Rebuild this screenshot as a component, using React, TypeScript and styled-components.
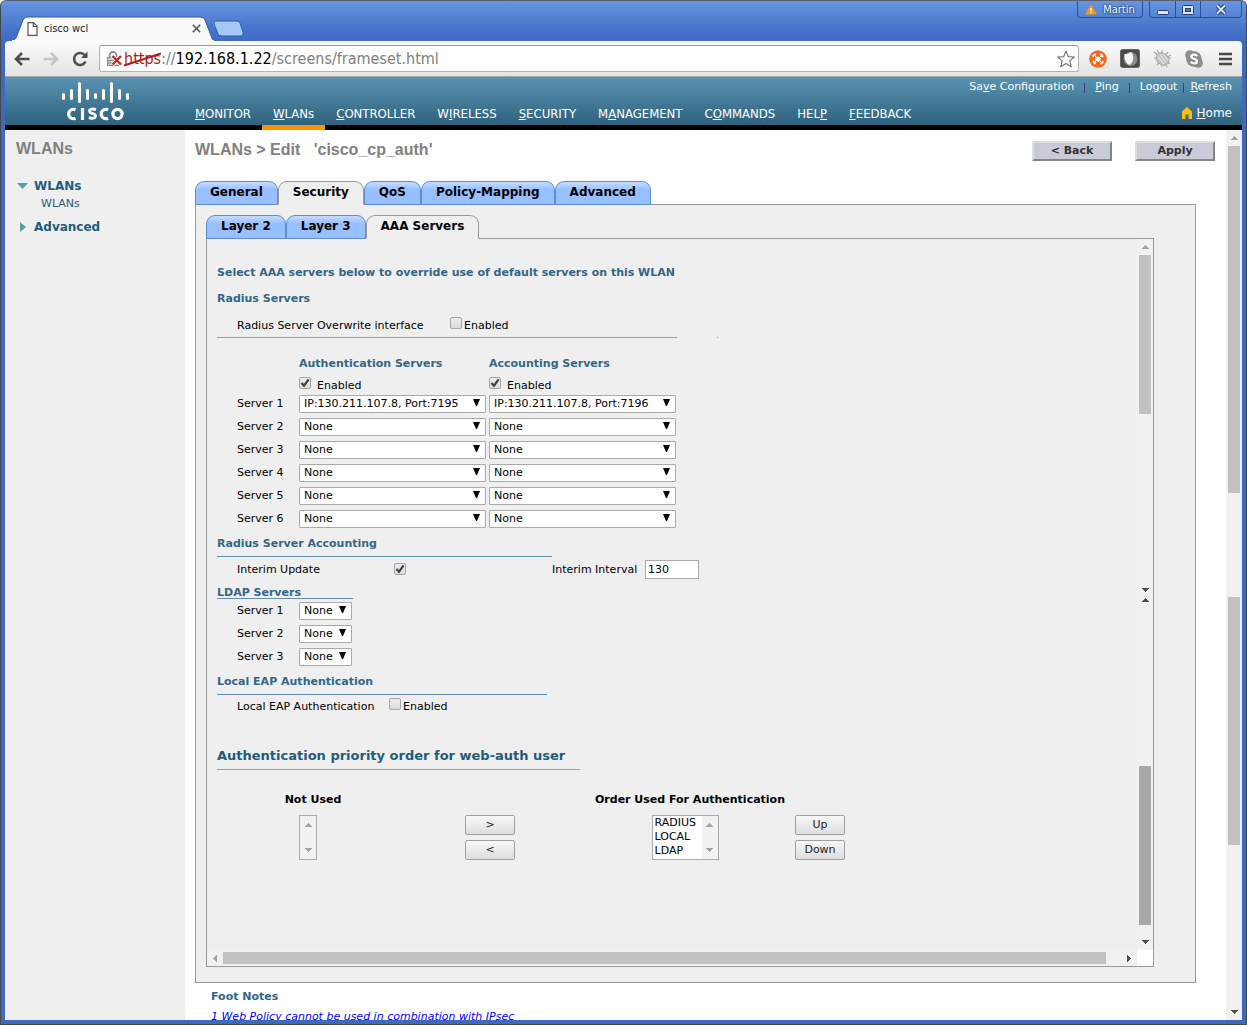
import React from "react";
import styled, { createGlobalStyle, css } from "styled-components";

const verdana = `Verdana, "DejaVu Sans", sans-serif`;
const tahoma = `Tahoma, "DejaVu Sans Condensed", "Noto Sans", sans-serif`;
const arial = `Arial, "Liberation Sans", sans-serif`;

const GlobalStyle = createGlobalStyle`
  *, *::before, *::after { box-sizing: border-box; }
  body { margin: 0; background: #fff; font-family: ${verdana}; font-size: 11px; color: #000; }
  button, input, select { font: inherit; color: inherit; margin: 0; }
  a { color: inherit; text-decoration: none; }
  h1, h2, h3, p, ul { margin: 0; padding: 0; }
  svg { display: block; flex: none; }
`;

/* ---------- browser window ---------- */

const Window = styled.div`
  display: flex;
  flex-direction: column;
  height: calc(100vh - 3px);
  padding: 0 4px 4px 4px;
  background: #3c6abf;
  border: 1px solid #44474f;
  border-top-color: #5a5f6b;
  border-radius: 6px 6px 0 0;
  overflow: hidden;
`;

const TitleBar = styled.div`
  display: flex;
  justify-content: space-between;
  align-items: flex-end;
  flex: none;
  height: 40px;
  margin: 0 -4px;
  background: linear-gradient(#6696e0, #4674cb 70%, #3f6bc4);
`;

const TabStrip = styled.div`
  display: flex;
  align-items: flex-end;
  padding-left: 10px;
`;

const BrowserTab = styled.div`
  display: grid;
  width: 204px;
  height: 25px;
  & > * { grid-area: 1 / 1; }
`;

const BrowserTabLabel = styled.div`
  display: flex;
  align-items: center;
  gap: 6px;
  padding: 0 14px 0 16px;
  font: 11px/16px ${tahoma};
  color: #222;
  z-index: 1;
  span { flex: 1; }
`;

const NewTab = styled.button`
  width: 32px;
  height: 25px;
  padding: 0;
  border: 0;
  background: none;
`;

const WindowControls = styled.div`
  display: flex;
  align-self: flex-start;
  gap: 6px;
  padding-right: 4px;
`;

const ControlGroup = styled.div`
  display: flex;
  height: 17px;
  border: 1px solid #2b4e99;
  border-top: 0;
  border-radius: 0 0 4px 4px;
`;

const ControlButton = styled.button<{ $width: number }>`
  display: flex;
  align-items: center;
  justify-content: center;
  gap: 6px;
  width: ${(p) => p.$width}px;
  padding: 1px 0 0;
  border: 0;
  background: none;
  color: #fff;
  font: 11px/14px ${tahoma};
  text-shadow: 0 0 2px #1d2f5c, 0 0 2px #1d2f5c;
  & + & { border-left: 1px solid #2b4e99; }
`;

const Toolbar = styled.div`
  display: flex;
  align-items: center;
  flex: none;
  height: 36px;
  padding: 0 8px 0 9px;
  background: linear-gradient(#fbfbfb, #e3e3e3);
  border-bottom: 1px solid #a5a5a5;
  border-radius: 4px 4px 0 0;
`;

const IconButton = styled.button`
  padding: 0;
  border: 0;
  background: none;
`;

const NavButtons = styled.div`
  display: flex;
  align-items: center;
  gap: 13px;
`;

const Omnibox = styled.div`
  display: flex;
  align-items: center;
  flex: 1;
  height: 27px;
  margin: 0 10px 0 11px;
  padding: 0 3px 0 7px;
  border: 1px solid #b4b4b4;
  border-top-color: #999;
  border-radius: 3px;
  background: #fff;
`;

const Address = styled.div`
  flex: 1;
  padding-left: 2px;
  font: 16px/24px ${tahoma};
  color: #808080;
  b { font-weight: 400; color: #000; }
`;

const StruckScheme = styled.span`
  display: inline-grid;
  color: #b01818;
  & > * { grid-area: 1 / 1; }
  svg { width: 100%; height: 24px; }
`;

const Extensions = styled.div`
  display: flex;
  align-items: center;
  gap: 13px;
`;

/* ---------- controller header ---------- */

const Viewport = styled.div`
  display: flex;
  flex-direction: column;
  flex: 1;
  min-height: 0;
  background: #fff;
`;

const Header = styled.header`
  display: flex;
  flex: none;
  height: 53px;
  background: linear-gradient(#5a93b3, #2e627d 48px, #000 48px);
  color: #fff;
`;

const LogoCell = styled.div`
  flex: none;
  width: 179px;
  padding: 5px 0 0 56px;
`;

const MainNav = styled.nav`
  display: flex;
  align-items: flex-end;
  flex: 1;
`;

const NavLink = styled.a<{ $active?: boolean }>`
  height: 26px;
  padding: 1px 11px 0;
  border-bottom: 5px solid ${(p) => (p.$active ? "#ff9000" : "#000")};
  font: 13px/18px ${tahoma};
  white-space: nowrap;
`;

const HeaderSide = styled.div`
  display: flex;
  flex-direction: column;
  align-items: flex-end;
  padding: 1px 10px 0 0;
`;

const UtilityLinks = styled.div<{ $gap: number }>`
  display: flex;
  gap: ${(p) => p.$gap}px;
  font: 11px/18px ${verdana};
  white-space: nowrap;
  i { width: 1px; height: 10px; margin-top: 5px; background: #3a3f78; }
`;

const HomeLink = styled.a`
  display: flex;
  align-items: center;
  gap: 5px;
  margin-top: 8px;
  font: 12px/18px ${verdana};
`;

/* ---------- page body ---------- */

const Body = styled.div`
  display: flex;
  flex: 1;
  min-height: 0;
`;

const Sidebar = styled.aside`
  flex: none;
  width: 180px;
  padding: 9px 11px;
  background: #efefef;
  color: #1f5c7c;
`;

const PageTitle = styled.h1`
  font: bold 16px/20px ${arial};
  color: #808080;
  white-space: pre;
`;

const TreeItem = styled.a`
  display: flex;
  align-items: center;
  gap: 6px;
  height: 20px;
  font: bold 12px/20px ${verdana};
`;

const TreeLeaf = styled.a`
  display: block;
  padding-left: 25px;
  font: 11px/16px ${verdana};
`;

const TreeGroup = styled.div<{ $top: number }>`
  padding-top: ${(p) => p.$top}px;
`;

const Main = styled.main`
  flex: 1;
  min-width: 0;
  padding: 10px 30px 0 10px;
  background: #fff;
  overflow: hidden;
`;

const TitleRow = styled.div`
  display: flex;
  justify-content: space-between;
`;

const Actions = styled.div`
  display: flex;
  gap: 23px;
  margin-right: -19px;
  padding-top: 1px;
`;

const ActionButton = styled.button`
  width: 80px;
  height: 20px;
  padding: 0;
  border: 2px solid;
  border-color: #dedede #848484 #848484 #dedede;
  background: #c9cbd6;
  font: bold 11px/14px ${verdana};
  color: #333;
`;

const Tabs = styled.div`
  display: flex;
  margin-bottom: -1px;
`;

const Tab = styled.button<{ $active?: boolean }>`
  height: 24px;
  padding: 0 14px 2px;
  border: 1px solid #5c8ed6;
  border-radius: 9px 9px 0 0;
  background: linear-gradient(#c5dbff, #98bfff 8px);
  font: bold 12px/20px ${verdana};
  color: #000;
  ${(p) =>
    p.$active &&
    css`
      border-color: #999;
      border-bottom-color: #efefef;
      background: #efefef;
    `}
`;

const OuterPanel = styled.section`
  padding: 10px 41px 15px 10px;
  border: 1px solid #999;
  background: #efefef;
`;

const PanelGroup = styled.div`
  padding-top: 20px;
`;

const InnerPanel = styled.div`
  display: grid;
  grid-template-columns: 1fr 16px;
  grid-template-rows: 1fr 16px;
  border: 1px solid #999;
  background: #efefef;
`;

const ScrollCorner = styled.div`
  background: #fff;
`;

const Content = styled.form`
  min-width: 0;
  padding: 25px 10px 90px;
`;

/* ---------- scrollbars ---------- */

const Bar = styled.div<{ $horizontal?: boolean }>`
  display: flex;
  flex: none;
  flex-direction: ${(p) => (p.$horizontal ? "row" : "column")};
  ${(p) => (p.$horizontal ? "height" : "width")}: 16px;
  background: #f1f1f1;
`;

const BarArrow = styled.span<{ $size: number }>`
  display: flex;
  align-items: center;
  justify-content: center;
  flex: 0 0 ${(p) => p.$size}px;
`;

const Track = styled.span<{ $grow: number }>`
  flex: ${(p) => p.$grow} 1 0;
`;

const Thumb = styled(Track)<{ $dark?: boolean; $horizontal?: boolean }>`
  margin: ${(p) => (p.$horizontal ? "2px 0" : "0 2px")};
  background: ${(p) => (p.$dark ? "#a8a8a8" : "#c1c1c1")};
`;

/* ---------- form parts ---------- */

const Heading = styled.h2<{ $line?: number; $top?: number }>`
  width: ${(p) => (p.$line ? `${p.$line}px` : "auto")};
  max-width: 100%;
  margin-top: ${(p) => p.$top ?? 0}px;
  padding-bottom: ${(p) => (p.$line ? 3 : 0)}px;
  border-bottom: ${(p) => (p.$line ? "1px solid #5f8fae" : "0")};
  font: bold 11px/18px ${verdana};
  color: #336688;
`;

const TightHeading = styled(Heading)`
  padding-bottom: 0;
  line-height: 10px;
`;

const LargeHeading = styled(Heading)`
  padding-bottom: 4px;
  border-color: #8fa0bb;
  font-size: 13px;
  color: #1f5c7c;
`;

const OverwriteRow = styled.div`
  display: flex;
  align-items: flex-end;
  gap: 40px;
  margin-top: 9px;
`;

const Field = styled.div<{ $line?: boolean; $label?: number }>`
  display: grid;
  grid-template-columns: ${(p) => p.$label ?? 213}px auto;
  justify-content: start;
  align-items: ${(p) => (p.$line ? "start" : "center")};
  width: ${(p) => (p.$line ? "460px" : "auto")};
  height: ${(p) => (p.$line ? 21 : 24)}px;
  padding-left: 20px;
  border-bottom: ${(p) => (p.$line ? "1px solid #8fa0bb" : "0")};
  line-height: 18px;
`;

const Dot = styled.span`
  width: 1px;
  height: 1px;
  background: #999;
`;

const CheckLabel = styled.label<{ $gap?: number }>`
  display: flex;
  align-items: flex-start;
  gap: ${(p) => p.$gap ?? 2}px;
  line-height: 18px;
`;

const CheckWrap = styled.span`
  display: grid;
  width: 12px;
  height: 12px;
  & > * { grid-area: 1 / 1; }
`;

const CheckInput = styled.input`
  appearance: none;
  width: 12px;
  height: 12px;
  border: 1px solid #a6a6a6;
  border-radius: 2px;
  background: linear-gradient(#ededed, #dcdcdc);
`;

const ServerTable = styled.table`
  border-collapse: collapse;
  margin-top: 17px;
  margin-left: 20px;
  th, td { padding: 0; text-align: left; font-weight: 400; }
  thead th { font-weight: 700; color: #336688; height: 18px; line-height: 18px; }
  tbody th { width: 62px; height: 23px; }
`;

const ServerCell = styled.td`
  width: 190px;
`;

const EnabledCell = styled.td`
  height: 19px;
  vertical-align: top;
  & > label { padding-top: 4px; height: 19px; }
`;

const SelectBox = styled.span<{ $width: number }>`
  display: grid;
  width: ${(p) => p.$width}px;
  align-items: center;
  & > * { grid-area: 1 / 1; }
  svg { justify-self: end; margin: 0 6px 2px 0; pointer-events: none; }
`;

const SelectInput = styled.select`
  appearance: none;
  width: 100%;
  height: 18px;
  padding: 0 4px;
  border: 1px solid #a9a9a9;
  border-radius: 1px;
  background: #fff;
  line-height: 16px;
`;

const LdapList = styled.div`
  display: grid;
  grid-template-columns: 62px auto;
  grid-auto-rows: 23px;
  justify-content: start;
  align-items: center;
  padding-left: 20px;
`;

const InterimRow = styled.div`
  display: grid;
  grid-template-columns: 157px 158px 93px 54px;
  align-items: center;
  height: 24px;
  padding-left: 20px;
`;

const TextInput = styled.input`
  width: 54px;
  height: 19px;
  padding: 0 2px;
  border: 1px solid #a9a9a9;
  background: #fff;
`;

const Priority = styled.div`
  display: grid;
  grid-template-columns: 164px 190px 210px 50px;
  row-gap: 6px;
  justify-items: center;
  margin-top: 21px;
  padding-left: 14px;
`;

const ListTitle = styled.h3`
  font: bold 11px/18px ${verdana};
`;

const ButtonStack = styled.div`
  display: grid;
  gap: 5px;
  align-content: start;
`;

const SmallButton = styled.button`
  width: 50px;
  height: 20px;
  padding: 0;
  border: 1px solid #a0a0a0;
  border-radius: 2px;
  background: linear-gradient(#f8f8f8, #dddddd);
  font: 11px/18px ${verdana};
  color: #222;
`;

const ListFrame = styled.div`
  display: flex;
  height: 45px;
  margin-right: 10px;
  border: 1px solid #a9a9a9;
`;

const ListInput = styled.select<{ $width: number }>`
  width: ${(p) => p.$width}px;
  height: 43px;
  padding: 0;
  border: 0;
  background: #fff;
  overflow: hidden;
  option { min-height: 0; height: 14px; padding: 0 2px; line-height: 14px; font-size: 11px; }
`;

const Footnotes = styled.footer`
  padding: 5px 16px 0;
  h2 { font: bold 11px/18px ${verdana}; color: #336688; }
  a { display: block; margin-top: 2px; font: italic 11px/18px ${verdana}; color: #0000ff; }
`;

/* ---------- drawings ---------- */

type Direction = "up" | "down" | "left" | "right";

const arrowPaths: Record<Direction, string> = {
  up: "M0 4h7v-1h-1v-1h-1v-1h-1v-1h-1v1h-1v1h-1v1h-1z",
  down: "M0 0h7v1h-1v1h-1v1h-1v1h-1v-1h-1v-1h-1v-1h-1z",
  left: "M4 0v7h-1v-1h-1v-1h-1v-1h-1v-1h1v-1h1v-1h1v-1z",
  right: "M0 0v7h1v-1h1v-1h1v-1h1v-1h-1v-1h-1v-1h-1v-1z",
};

function Arrow({ dir, color = "#505050" }: { dir: Direction; color?: string }) {
  const flat = dir === "up" || dir === "down";
  const [w, h] = flat ? [7, 4] : [4, 7];
  return (
    <svg width={w} height={h} viewBox={`0 0 ${w} ${h}`} shapeRendering="crispEdges">
      <path d={arrowPaths[dir]} fill={color} />
    </svg>
  );
}

function CiscoLogo() {
  const bars = [
    [1, 11, 7], [9, 7, 11], [17, 0, 21], [25, 7, 11], [33, 11, 6],
    [41, 7, 11], [49, 0, 21], [57, 7, 11], [65, 11, 7],
  ];
  return (
    <svg width="70" height="40" viewBox="0 0 70 40">
      {bars.map(([x, y, h]) => (
        <rect key={x} x={x} y={y} width="3" height={h} rx="1.5" fill="#fff" />
      ))}
      <g fill="none" stroke="#fff" strokeWidth="3.200">
        <path d="M14.500 27.800A4.700 4.700 0 1 0 14.500 36.200" />
        <path d="M21.500 26v12" />
        <path d="M35 27.600c-3-1-6.500-.8-6.500 1.300 0 3.500 6 1.700 6 4.800 0 2.700-3.500 3-6.700 2" strokeWidth="2.800" />
        <path d="M47 27.800A4.700 4.700 0 1 0 47 36.200" />
        <circle cx="56.500" cy="32" r="4.600" />
      </g>
    </svg>
  );
}

function Checkbox({ id, checked }: { id?: string; checked?: boolean }) {
  return (
    <CheckWrap>
      <CheckInput type="checkbox" id={id} defaultChecked={checked} />
      {checked && (
        <svg width="12" height="12" viewBox="0 0 12 12" pointerEvents="none">
          <path d="M2.500 6l2.500 2.700L9.600 2.400" fill="none" stroke="#404040" strokeWidth="2.200" />
        </svg>
      )}
    </CheckWrap>
  );
}

function Dropdown({ id, label, value, width }: { id?: string; label?: string; value: string; width: number }) {
  return (
    <SelectBox $width={width}>
      <SelectInput id={id} aria-label={label} defaultValue={value}>
        <option>{value}</option>
      </SelectInput>
      <svg width="7" height="7" viewBox="0 0 7 7">
        <path d="M0 0h7L4 7h-1z" fill="#000" />
      </svg>
    </SelectBox>
  );
}

function ListScroll() {
  return (
    <Bar>
      <BarArrow $size={18}><Arrow dir="up" color="#a3a3a3" /></BarArrow>
      <Track $grow={1} />
      <BarArrow $size={18}><Arrow dir="down" color="#a3a3a3" /></BarArrow>
    </Bar>
  );
}

function Accel({ text, at = 0 }: { text: string; at?: number }) {
  return (
    <span>
      {text.slice(0, at)}
      <u>{text[at]}</u>
      {text.slice(at + 1)}
    </span>
  );
}

/* ---------- sections ---------- */

function BrowserChrome() {
  return (
    <>
      <TitleBar>
        <TabStrip>
          <BrowserTab>
            <svg width="204" height="25" viewBox="0 0 204 25">
              <path d="M0 25C5 24 5 22 7 17L12 4Q13 1 17 1H189Q193 1 194 4L199 17C201 22 201 24 204 25Z" fill="#fafafa" stroke="#3059ab" strokeWidth="1" />
              <path d="M1 24.500H203" stroke="#fafafa" />
            </svg>
            <BrowserTabLabel>
              <svg width="11" height="14" viewBox="0 0 11 14">
                <path d="M1 .7H6.500L10 4.200V13.300H1ZM6.300 1V4.500H10" fill="#fff" stroke="#555" strokeWidth="1.200" />
              </svg>
              <span>cisco wcl</span>
              <svg width="9" height="9" viewBox="0 0 9 9">
                <path d="M.8.8L8.200 8.200M8.200.8L.8 8.200" stroke="#555" strokeWidth="1.600" />
              </svg>
            </BrowserTabLabel>
          </BrowserTab>
          <NewTab type="button" aria-label="New tab">
            <svg width="32" height="25" viewBox="0 0 32 25">
              <path d="M0 5H21Q24 5 25 7L28 16Q29 20 26 20H7Q4 20 3 18L-1 8Q-2 5 0 5Z" fill="#a5c8f5" stroke="#3059ab" />
            </svg>
          </NewTab>
        </TabStrip>
        <WindowControls>
          <ControlGroup>
            <ControlButton type="button" $width={64}>
              <svg width="12" height="11" viewBox="0 0 12 11">
                <path d="M6 0L12 10.500H0Z" fill="#f39a12" />
                <path d="M6 4V7M6 8V9.300" stroke="#fff" strokeWidth="1.200" />
              </svg>
              Martin
            </ControlButton>
          </ControlGroup>
          <ControlGroup>
            <ControlButton type="button" $width={25} aria-label="Minimize">
              <svg width="12" height="12" viewBox="0 0 12 12">
                <rect x=".5" y="6.500" width="11" height="4" rx="1" fill="#dde6f8" stroke="#243c78" />
              </svg>
            </ControlButton>
            <ControlButton type="button" $width={25} aria-label="Maximize">
              <svg width="12" height="10" viewBox="0 0 12 10">
                <rect x=".5" y=".5" width="11" height="9" rx="1" fill="#dde6f8" stroke="#243c78" />
                <rect x="3.500" y="3.500" width="5" height="3" fill="#4e7bcf" stroke="#243c78" />
              </svg>
            </ControlButton>
            <ControlButton type="button" $width={41} aria-label="Close">
              <svg width="12" height="11" viewBox="0 0 12 11">
                <path d="M2 1.500L10 9.500M10 1.500L2 9.500" stroke="#243c78" strokeWidth="4" />
                <path d="M2 1.500L10 9.500M10 1.500L2 9.500" stroke="#dde6f8" strokeWidth="2" />
              </svg>
            </ControlButton>
          </ControlGroup>
        </WindowControls>
      </TitleBar>
      <Toolbar>
        <NavButtons>
          <IconButton type="button" aria-label="Back">
            <svg width="16" height="14" viewBox="0 0 16 14">
              <path d="M8 1L2 7L8 13M2 7H15.500" fill="none" stroke="#505050" strokeWidth="2.600" />
            </svg>
          </IconButton>
          <IconButton type="button" aria-label="Forward">
            <svg width="16" height="14" viewBox="0 0 16 14">
              <path d="M8 1L14 7L8 13M14 7H.5" fill="none" stroke="#c4c4c4" strokeWidth="2.600" />
            </svg>
          </IconButton>
          <IconButton type="button" aria-label="Reload">
            <svg width="16" height="16" viewBox="0 0 16 16">
              <path d="M13 4.500A6 6 0 1 0 13.500 10.500" fill="none" stroke="#505050" strokeWidth="2.600" />
              <path d="M15.500.5V7H9Z" fill="#505050" />
            </svg>
          </IconButton>
        </NavButtons>
        <Omnibox>
          <svg width="15" height="16" viewBox="0 0 15 16">
            <path d="M2.500 7V4.500a3.500 3.500 0 0 1 7 0V7" fill="none" stroke="#8a8a8a" strokeWidth="1.800" />
            <rect x=".5" y="6.500" width="11" height="8" fill="#d0d0d0" stroke="#8a8a8a" />
            <path d="M1 9.500H11M1 12H11" stroke="#8a8a8a" />
            <path d="M5.500 5L14 13.500M14 5L5.500 13.500" stroke="#fff" strokeWidth="4" />
            <path d="M5.500 5L14 13.500M14 5L5.500 13.500" stroke="#d3181c" strokeWidth="2.200" />
          </svg>
          <Address>
            <StruckScheme>
              <span>https</span>
              <svg viewBox="0 0 36 24" preserveAspectRatio="none">
                <path d="M0 18.500L36 6.500" stroke="#b01818" strokeWidth="2" />
              </svg>
            </StruckScheme>
            ://<b>192.168.1.22</b>/screens/frameset.html
          </Address>
          <svg width="18" height="18" viewBox="0 0 18 18">
            <path d="M9 1L11.300 6.700L17.300 7L12.700 10.900L14.300 16.800L9 13.500L3.700 16.800L5.300 10.900L.7 7L6.700 6.700Z" fill="#fff" stroke="#777" strokeWidth="1.200" strokeLinejoin="round" />
          </svg>
        </Omnibox>
        <Extensions>
          <svg width="18" height="18" viewBox="0 0 18 18">
            <circle cx="9" cy="9" r="8.800" fill="#f26a1e" />
            <circle cx="9" cy="9" r="2.600" fill="#fff" />
            <path d="M3.500 6.500L6.500 4M11.500 4L14 7M14.500 11.500L11.500 14M6.500 14L4 11" fill="none" stroke="#fff" strokeWidth="2" />
            <path d="M5 5L7 7M13 5L11 7M13 13L11 11M5 13L7 11" stroke="#fff" strokeWidth="1" />
          </svg>
          <svg width="20" height="19" viewBox="0 0 20 19">
            <rect x=".5" y=".5" width="19" height="18" rx="2" fill="#4a4a4a" stroke="#666" />
            <circle cx="10.500" cy="10" r="7" fill="#8a8a8a" />
            <path d="M4.500 5C7 5.500 9 4 11 3C14.500 6 14 13 9.500 16C6 14.500 4 10 4.500 5Z" fill="#f4f4f4" />
          </svg>
          <svg width="19" height="19" viewBox="0 0 19 19">
            <path d="M1 3L17 15M4 1L14 18M9 1V18M1 9H18M15 3L4 16M18 6L5 13" stroke="#a8a8a8" strokeWidth="1.200" />
            <ellipse cx="9.500" cy="10" rx="7" ry="5.500" fill="#c6c6c6" stroke="#aaa" transform="rotate(40 9.500 10)" />
            <path d="M5 8L11 15M7 6L13 13M10 5L15 11" stroke="#eee" />
          </svg>
          <svg width="18" height="18" viewBox="0 0 18 18">
            <circle cx="5" cy="5" r="4.800" fill="#8c8c8c" />
            <circle cx="13" cy="13" r="4.800" fill="#8c8c8c" />
            <circle cx="9" cy="9" r="7.800" fill="#8c8c8c" />
            <path d="M12.300 6.300C11 4 6.300 4 6.300 6.500C6.300 9.500 12 8 12 11.200C12 14 7 14 5.700 11.500" fill="none" stroke="#fff" strokeWidth="2.200" />
          </svg>
          <IconButton type="button" aria-label="Menu">
            <svg width="18" height="14" viewBox="0 0 18 14">
              <path d="M3 2H16M3 7H16M3 12H16" stroke="#484848" strokeWidth="2.600" />
            </svg>
          </IconButton>
        </Extensions>
      </Toolbar>
    </>
  );
}

const navItems: [string, number][] = [
  ["MONITOR", 0],
  ["WLANs", 0],
  ["CONTROLLER", 0],
  ["WIRELESS", 1],
  ["SECURITY", 0],
  ["MANAGEMENT", 1],
  ["COMMANDS", 1],
  ["HELP", 3],
  ["FEEDBACK", 0],
];

function ControllerHeader() {
  return (
    <Header>
      <LogoCell><CiscoLogo /></LogoCell>
      <MainNav>
        {navItems.map(([item, at]) => (
          <NavLink key={item} href="#" $active={item === "WLANs"}>
            <Accel text={item} at={at} />
          </NavLink>
        ))}
      </MainNav>
      <HeaderSide>
        <UtilityLinks $gap={10}>
          <a href="#"><Accel text="Save Configuration" at={2} /></a>
          <i />
          <a href="#"><Accel text="Ping" /></a>
          <i />
          <UtilityLinks $gap={6}>
            <a href="#"><Accel text="Logout" at={2} /></a>
            <i />
            <a href="#"><Accel text="Refresh" /></a>
          </UtilityLinks>
        </UtilityLinks>
        <HomeLink href="#">
          <svg width="10" height="12" viewBox="0 0 10 12">
            <path d="M0 12V4.500L5 0L10 4.500V12H6.500V7.500H3.500V12Z" fill="#fbbf00" />
          </svg>
          <Accel text="Home" />
        </HomeLink>
      </HeaderSide>
    </Header>
  );
}

const outerTabs = ["General", "Security", "QoS", "Policy-Mapping", "Advanced"];
const innerTabs = ["Layer 2", "Layer 3", "AAA Servers"];

const servers = [
  ["IP:130.211.107.8, Port:7195", "IP:130.211.107.8, Port:7196"],
  ["None", "None"],
  ["None", "None"],
  ["None", "None"],
  ["None", "None"],
  ["None", "None"],
];

function AaaForm() {
  return (
    <Content>
      <Heading>Select AAA servers below to override use of default servers on this WLAN</Heading>
      <Heading $top={8}>Radius Servers</Heading>
      <OverwriteRow>
        <Field $line>
          <span>Radius Server Overwrite interface</span>
          <CheckLabel><Checkbox />Enabled</CheckLabel>
        </Field>
        <Dot />
      </OverwriteRow>

      <ServerTable>
        <thead>
          <tr>
            <td />
            <th scope="col">Authentication Servers</th>
            <th scope="col">Accounting Servers</th>
          </tr>
        </thead>
        <tbody>
          <tr>
            <td />
            <EnabledCell><CheckLabel $gap={6}><Checkbox checked />Enabled</CheckLabel></EnabledCell>
            <EnabledCell><CheckLabel $gap={6}><Checkbox checked />Enabled</CheckLabel></EnabledCell>
          </tr>
          {servers.map(([auth, acct], i) => (
            <tr key={i}>
              <th scope="row">Server {i + 1}</th>
              <ServerCell><Dropdown label={`Authentication server ${i + 1}`} value={auth} width={187} /></ServerCell>
              <ServerCell><Dropdown label={`Accounting server ${i + 1}`} value={acct} width={187} /></ServerCell>
            </tr>
          ))}
        </tbody>
      </ServerTable>

      <Heading $top={5} $line={335}>Radius Server Accounting</Heading>
      <InterimRow>
        <label htmlFor="interim">Interim Update</label>
        <Checkbox id="interim" checked />
        <label htmlFor="interval">Interim Interval</label>
        <TextInput id="interval" defaultValue="130" />
      </InterimRow>

      <TightHeading $top={7} $line={136}>LDAP Servers</TightHeading>
      <LdapList>
        {[1, 2, 3].map((n) => (
          <React.Fragment key={n}>
            <label htmlFor={`ldap${n}`}>Server {n}</label>
            <Dropdown id={`ldap${n}`} value="None" width={53} />
          </React.Fragment>
        ))}
      </LdapList>

      <Heading $top={5} $line={330}>Local EAP Authentication</Heading>
      <Field $label={152}>
        <span>Local EAP Authentication</span>
        <CheckLabel><Checkbox />Enabled</CheckLabel>
      </Field>

      <LargeHeading $top={28} $line={363}>Authentication priority order for web-auth user</LargeHeading>
      <Priority>
        <ListTitle>Not Used</ListTitle>
        <span />
        <ListTitle>Order Used For Authentication</ListTitle>
        <span />
        <ListFrame><ListScroll /></ListFrame>
        <ButtonStack>
          <SmallButton type="button">&gt;</SmallButton>
          <SmallButton type="button">&lt;</SmallButton>
        </ButtonStack>
        <ListFrame>
          <ListInput $width={49} size={3} aria-label="Order Used For Authentication">
            <option>RADIUS</option>
            <option>LOCAL</option>
            <option>LDAP</option>
          </ListInput>
          <ListScroll />
        </ListFrame>
        <ButtonStack>
          <SmallButton type="button">Up</SmallButton>
          <SmallButton type="button">Down</SmallButton>
        </ButtonStack>
      </Priority>
    </Content>
  );
}

export default function App() {
  return (
    <>
      <GlobalStyle />
      <Window>
        <BrowserChrome />
        <Viewport>
          <ControllerHeader />
          <Body>
            <Sidebar>
              <PageTitle as="h2">WLANs</PageTitle>
              <TreeGroup $top={17}>
                <TreeItem href="#">
                  <svg width="12" height="6" viewBox="0 0 12 6"><path d="M1 0H12L6.500 6Z" fill="#5f9ea0" /></svg>
                  WLANs
                </TreeItem>
                <TreeLeaf href="#">WLANs</TreeLeaf>
              </TreeGroup>
              <TreeGroup $top={5}>
                <TreeItem href="#">
                  <svg width="12" height="12" viewBox="0 0 12 12"><path d="M4 1V11L10 6Z" fill="#5f9ea0" /></svg>
                  Advanced
                </TreeItem>
              </TreeGroup>
            </Sidebar>
            <Main>
              <TitleRow>
                <PageTitle>{"WLANs > Edit   'cisco_cp_auth'"}</PageTitle>
                <Actions>
                  <ActionButton type="button">&lt; Back</ActionButton>
                  <ActionButton type="button">Apply</ActionButton>
                </Actions>
              </TitleRow>
              <PanelGroup>
                <Tabs>
                  {outerTabs.map((t) => (
                    <Tab key={t} type="button" $active={t === "Security"}>{t}</Tab>
                  ))}
                </Tabs>
                <OuterPanel>
                  <Tabs>
                    {innerTabs.map((t) => (
                      <Tab key={t} type="button" $active={t === "AAA Servers"}>{t}</Tab>
                    ))}
                  </Tabs>
                  <InnerPanel>
                    <AaaForm />
                    <Bar>
                      <BarArrow $size={16}><Arrow dir="up" color="#a3a3a3" /></BarArrow>
                      <Thumb $grow={159} />
                      <Track $grow={171} />
                      <BarArrow $size={10}><Arrow dir="down" /></BarArrow>
                      <BarArrow $size={10}><Arrow dir="up" /></BarArrow>
                      <Track $grow={161} />
                      <Thumb $grow={159} $dark />
                      <Track $grow={9} />
                      <BarArrow $size={16}><Arrow dir="down" /></BarArrow>
                    </Bar>
                    <Bar $horizontal>
                      <BarArrow $size={16}><Arrow dir="left" color="#a3a3a3" /></BarArrow>
                      <Thumb $grow={884} $horizontal />
                      <Track $grow={15} />
                      <BarArrow $size={16}><Arrow dir="right" /></BarArrow>
                    </Bar>
                    <ScrollCorner />
                  </InnerPanel>
                </OuterPanel>
              </PanelGroup>
              <Footnotes>
                <h2>Foot Notes</h2>
                <a href="#">1 Web Policy cannot be used in combination with IPsec</a>
              </Footnotes>
            </Main>
            <Bar>
              <BarArrow $size={16}><Arrow dir="up" color="#a3a3a3" /></BarArrow>
              <Thumb $grow={347} />
              <Track $grow={104} />
              <Thumb $grow={248} />
              <Track $grow={159} />
              <BarArrow $size={16}><Arrow dir="down" /></BarArrow>
            </Bar>
          </Body>
        </Viewport>
      </Window>
    </>
  );
}
